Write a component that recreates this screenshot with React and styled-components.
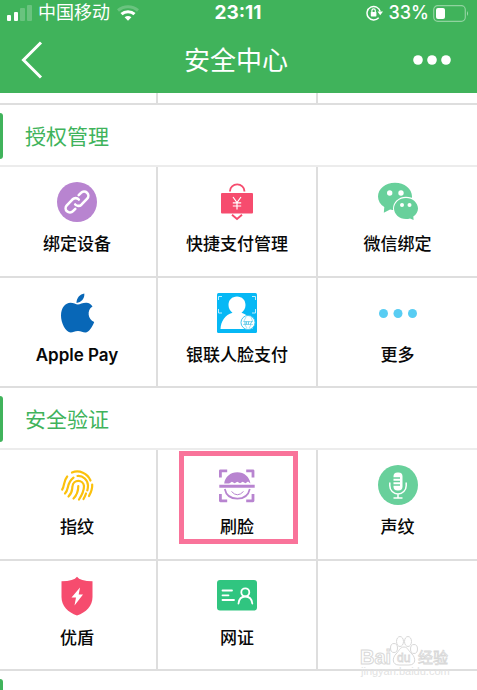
import React from 'react';
import styled, { createGlobalStyle } from 'styled-components';

const GlobalStyle = createGlobalStyle`
  * { box-sizing: border-box; }
  body {
    margin: 0;
    background: #fff;
    font-family: Inter, "Noto Sans CJK SC", sans-serif;
  }
  button { font: inherit; color: inherit; border: 0; padding: 0; background: none; cursor: pointer; }
  svg { display: block; }
`;

const green = '#40b35b';
const line = '#dedede';

const Screen = styled.div`
  position: relative;
  height: 100vh;
  overflow: hidden;
  background: #fff;
`;

const TopBar = styled.header`
  background: ${green};
  color: #fff;
`;

const StatusBar = styled.div`
  display: grid;
  grid-template-columns: 1fr auto 1fr;
  align-items: center;
  height: 26px;
  padding: 0 8px 0 7px;
  font-size: 18px;
  line-height: 26px;
`;

const StatusGroup = styled.div`
  display: flex;
  align-items: center;
  justify-content: ${(p) => (p.$end ? 'flex-end' : 'flex-start')};
  gap: 6px;
`;

const Battery = styled.span`
  display: flex;
  align-items: center;
  gap: 4px;
  font-weight: 500;
`;

const Clock = styled.time`
  font-size: 19px;
  font-weight: 700;
`;

const NavBar = styled.div`
  display: grid;
  grid-template-columns: 1fr auto 1fr;
  align-items: center;
  height: 67px;
  padding: 0 25px 0 20px;
`;

const NavButton = styled.button`
  justify-self: ${(p) => (p.$end ? 'end' : 'start')};
`;

const Title = styled.h1`
  margin: 0;
  padding-top: 2px;
  font-size: 26px;
  font-weight: 400;
  line-height: 36px;
`;

const Grid = styled.div`
  display: grid;
  grid-template-columns: 158fr 158fr 159fr;
  grid-template-rows: ${(p) => (p.$peek ? '10px' : '109px 108px')};
  gap: 2px;
  margin-left: -2px;
  background: ${line};
  border-bottom: 2px solid ${line};
`;

const Cell = styled.div`
  background: #fff;
`;

const Tile = styled.button`
  position: relative;
  display: flex;
  flex-direction: column;
  align-items: center;
  gap: 10px;
  min-width: 0;
  padding-top: 15px;
  background: #fff;
  color: #080808;
`;

const TileLabel = styled.span`
  font-size: 17px;
  font-weight: 500;
  line-height: 24px;
  white-space: nowrap;
`;

const LatinLabel = styled(TileLabel)`
  font-weight: 600;
`;

const Highlight = styled.span`
  position: absolute;
  inset: 1px 18px 15px 21px;
  border: 5px solid #f9739a;
  pointer-events: none;
`;

const SectionHead = styled.div`
  display: flex;
  align-items: center;
  gap: 22px;
  height: 62px;
  padding-top: 2px;
  border-bottom: 2px solid #ececec;

  &::before {
    content: '';
    width: 3px;
    height: 46px;
    border-radius: 0 3px 3px 0;
    background: ${green};
  }
`;

const SectionTitle = styled.h2`
  margin: 0;
  padding-top: 2px;
  color: ${green};
  font-size: 21px;
  font-weight: 400;
  line-height: 30px;
`;

const Watermark = styled.svg`
  position: absolute;
  right: 17px;
  bottom: 6px;
  overflow: visible;
`;

const SignalIcon = () => (
  <svg width="25" height="16" viewBox="0 0 25 16" fill="#fff" aria-hidden="true">
    <rect x="0" y="10" width="4" height="6" rx="1" />
    <rect x="7" y="7" width="4" height="9" rx="1" />
    <rect x="13" y="3" width="5" height="13" rx="1" opacity=".22" />
    <rect x="20" y="0" width="5" height="16" rx="1" opacity=".22" />
  </svg>
);

const WifiIcon = () => (
  <svg width="24" height="16" viewBox="-1 0 24 16" fill="none" stroke="#fff" aria-hidden="true">
    <path d="M1 5.500C6.800 .5 15.200 .5 21 5.500" strokeWidth="3" opacity=".22" />
    <path d="M4.500 9.200C8 5.900 14 5.900 17.500 9.200" strokeWidth="3" />
    <path d="M7.600 12.300C9.600 10.500 12.400 10.500 14.400 12.300L11 15.800Z" fill="#fff" stroke="none" />
  </svg>
);

const LockIcon = () => (
  <svg width="17" height="16" viewBox="0 0 17 16" fill="none" stroke="#fff" aria-hidden="true">
    <path d="M12.700 12.700A6.700 6.700 0 1 1 14.200 6.500" strokeWidth="1.500" />
    <path d="M11.500 6.500H17L14.200 10.200Z" fill="#fff" stroke="none" />
    <rect x="4.800" y="7" width="5.600" height="4.400" rx=".6" fill="#fff" stroke="none" />
    <path d="M5.900 7V5.600a1.700 1.700 0 0 1 3.400 0V7" strokeWidth="1.200" />
  </svg>
);

const BatteryIcon = () => (
  <svg width="36" height="17" viewBox="0 0 36 17" fill="none" aria-hidden="true">
    <rect x=".7" y=".7" width="31.600" height="15.600" rx="4" stroke="#fff" strokeWidth="1.200" opacity=".42" />
    <rect x="3" y="3" width="9" height="11" rx="2" fill="#fff" />
    <path d="M34 6q2 2.500 0 5z" fill="#fff" opacity=".5" />
  </svg>
);

const BackIcon = () => (
  <svg width="24" height="38" viewBox="0 0 24 38" fill="none" stroke="#fff" strokeWidth="3" aria-hidden="true">
    <path d="M21 1.500L3.500 19L21 36.500" />
  </svg>
);

const MoreIcon = () => (
  <svg width="40" height="12" viewBox="0 0 40 12" fill="#fff" aria-hidden="true">
    <circle cx="6" cy="6" r="4.800" /><circle cx="20" cy="6" r="4.800" /><circle cx="34" cy="6" r="4.800" />
  </svg>
);

const Icon = ({ children }) => (
  <svg width="40" height="40" viewBox="0 0 40 40" fill="none" aria-hidden="true">{children}</svg>
);

const LinkIcon = () => (
  <Icon>
    <circle cx="20" cy="20" r="20" fill="#b884d0" />
    <g stroke="#fff" strokeWidth="2.600" strokeLinecap="round">
      <path d="M21.700 13.200l2.300-2.300a4.200 4.200 0 0 1 6.200 5.800l-5.800 6a4.300 4.300 0 0 1-6.200-.2" />
      <path d="M18.300 26.800l-2.300 2.300a4.200 4.200 0 0 1-6.200-5.800l5.800-6a4.300 4.300 0 0 1 6.200.2" />
    </g>
  </Icon>
);

const PayBagIcon = () => (
  <Icon>
    <rect x="4" y="11" width="32" height="20.500" rx="1" fill="#f64c6e" />
    <path d="M13 9.500V9a7.200 6.600 0 0 1 14.400 0v.5" stroke="#f64c6e" strokeWidth="1.900" />
    <path d="M15 32.800l5 4.200 5-4.200" stroke="#f64c6e" strokeWidth="1.900" />
    <path d="M16 15L20 20.500l4-5.500M20 20.500v7M15.800 20.800h8.400M15.800 24h8.400" stroke="#fff" strokeWidth="1.200" />
  </Icon>
);

const ChatIcon = () => (
  <Icon>
    <path d="M17 .8C7.600.8 0 6.800 0 14.500c0 4.300 2.300 8 6.300 10.500l-.5 5.800 6.300-3.300c1.600.4 3.200.6 4.900.6 9.400 0 17-6 17-13.600S26.400.8 17 .8z" fill="#68d09b" />
    <ellipse cx="28" cy="26.500" rx="13" ry="11.700" fill="#fff" />
    <path d="M28 16c-6.600 0-12 4.700-12 10.500S21.400 37 28 37c1.400 0 2.700-.2 4-.6l3.600 1.600-.3-3.400c2.800-2 4.700-4.800 4.700-8.100C40 20.700 34.600 16 28 16z" fill="#68d09b" />
    <g fill="#fff"><circle cx="11.700" cy="11" r="2.700" /><circle cx="23" cy="11" r="2.700" /><circle cx="24" cy="23" r="2" /><circle cx="31.500" cy="23" r="2" /></g>
  </Icon>
);

const AppleIcon = () => (
  <Icon>
    <path d="M19.500 9.900C19.400 5 23 1.200 27.300.5c.6 4.800-3.200 9.100-7.800 9.400z" fill="#0867b7" />
    <path d="M35.500 13.500c-6 3.500-4.700 13 1.700 15.500-2 5-5.300 10.300-8.700 10.500-2.600.1-4.300-1.500-7.500-1.500s-5 1.400-7.300 1.500C8.700 39.300 3.900 29.800 4 22.500 4.100 14.500 8.300 10 13.500 9.700c3 0 5.400 1.700 7.400 1.700 2 0 5.100-1.900 8.600-1.700 2.300.1 4.700 1.600 6 3.800z" fill="#0867b7" />
  </Icon>
);

const FacePayIcon = () => (
  <Icon>
    <rect width="40" height="40" rx="1.500" fill="#06b8f5" />
    <path d="M1.500 7V3.500H5M35 3.500h3.500V7M1.500 16v4H5M35 20h3.500v-4" stroke="#bdeeff" strokeWidth="1" />
    <path d="M20 3.500c-5 0-8.500 3.500-8.500 8.500 0 3.400 1.700 6 4 7.800C8 22 4 28 3.500 36h32C35.300 28 31.500 22 24.500 19.800c2.300-1.800 4-4.400 4-7.800 0-5-3.500-8.500-8.500-8.500z" fill="#fff" />
    <circle cx="31" cy="29.500" r="7" fill="#fff" stroke="#45c6ef" strokeWidth="1" />
    <path d="M26 28.500h10M26 31.500h10M29 24l-2 4M34 24l1.500 4M28 32l2 3M34 32l-2 3" stroke="#8dd9ef" strokeWidth=".8" />
    <path d="M28 28v4M30 28l-1 4M32 28l-1 4M35 28l-2 4" stroke="#56c7e8" strokeWidth="1" />
  </Icon>
);

const DotsIcon = () => (
  <Icon><g fill="#58cdf3"><circle cx="5.500" cy="20.500" r="4.500" /><circle cx="20" cy="20.500" r="4.500" /><circle cx="34.500" cy="20.500" r="4.500" /></g></Icon>
);

const FingerprintIcon = () => (
  <Icon>
    <g stroke="#fbc10c" strokeWidth="2.200" strokeLinecap="round">
      <path d="M15 7.500A14.300 14.300 0 0 1 33.500 15.500" />
      <path d="M5.200 24.500C7.800 21 6 16.500 10.200 11.500" />
      <path d="M35.200 19.500C35.500 24 33.700 28 32 31" />
      <path d="M8 28.500C12.500 24 9 18.500 16.500 12.700" />
      <path d="M20.500 11A9.800 9.800 0 0 1 31 20.500Q31 23 30.300 25.500" />
      <path d="M29 28.500Q28 31.500 26.500 34" />
      <path d="M11.500 31.500C16 27 14.800 25 15.500 21A5.800 5.800 0 0 1 27 21C27 26 25 30 22 34.500" />
      <path d="M16.500 33.500C20 30 21.300 26 21.300 21" />
    </g>
  </Icon>
);

const FaceScanIcon = () => (
  <Icon>
    <path d="M3.400 12.500V5.800h6.800M29.200 5.800H36v6.700M3.400 29v6.800h6.800M29.200 35.800H36V29" stroke="#b884d0" strokeWidth="2.800" strokeLinejoin="round" />
    <path d="M7.200 18.500C8 12 13.300 7.300 20.300 7.300S32.500 12 33.400 18.500L31 16.500l-2.500 1.800-2.800-1.600-2.700 1.600-2.700-1.600-2.700 1.600-2.700-1.600-2.700 1.800z" fill="#b884d0" />
    <path d="M2.300 21.300h35.400" stroke="#b884d0" strokeWidth="3" />
    <path d="M7.800 24C9 30 13.500 33.600 20.300 33.600S31.500 30 32.800 24" stroke="#b884d0" strokeWidth="1.700" />
    <path d="M14.500 26.500Q20.300 33 26.500 26.500" stroke="#b884d0" strokeWidth="1" />
  </Icon>
);

const MicIcon = () => (
  <Icon>
    <circle cx="20" cy="20" r="20" fill="#68d09b" />
    <rect x="15.500" y="7.500" width="9" height="18" rx="4" fill="#fff" />
    <path d="M15 13h7M15 16.500h7M15 20h7" stroke="#68d09b" strokeWidth="1.300" />
    <path d="M11.800 17.500v3.200a8.200 8.200 0 0 0 16.400 0v-3.200M20 29v4M15.500 33h9" stroke="#fff" strokeWidth="1.500" />
  </Icon>
);

const ShieldIcon = () => (
  <Icon>
    <path d="M20 .7Q17 5 4.500 5.300V21C4.500 30 11 36.500 20 39.500C29 36.500 35.500 30 35.500 21V5.300Q23 5 20 .7z" fill="#f64c6e" />
    <path d="M23 11.500L14.500 21.500H19L17.500 29.500L26 18.500H21.700z" fill="#fff" />
  </Icon>
);

const IdCardIcon = () => (
  <Icon>
    <rect y="4" width="40" height="30.500" rx="3" fill="#30c580" />
    <g stroke="#fff" strokeWidth="1.800" strokeLinecap="round">
      <path d="M5.500 14.500H15M5.500 19.300H11.500M5.500 24H17" />
      <circle cx="28.300" cy="16.300" r="4" />
      <path d="M21.500 27.500c.5-4.500 3-7 6.800-7s6.500 2.500 7 7" />
    </g>
  </Icon>
);

const sections = [
  {
    title: '授权管理',
    items: [
      { label: '绑定设备', icon: LinkIcon },
      { label: '快捷支付管理', icon: PayBagIcon },
      { label: '微信绑定', icon: ChatIcon },
      { label: 'Apple Pay', icon: AppleIcon, latin: true },
      { label: '银联人脸支付', icon: FacePayIcon },
      { label: '更多', icon: DotsIcon },
    ],
  },
  {
    title: '安全验证',
    items: [
      { label: '指纹', icon: FingerprintIcon },
      { label: '刷脸', icon: FaceScanIcon, highlighted: true },
      { label: '声纹', icon: MicIcon },
      { label: '优盾', icon: ShieldIcon },
      { label: '网证', icon: IdCardIcon },
    ],
  },
];

function Section({ title, items }) {
  return (
    <section>
      <SectionHead><SectionTitle>{title}</SectionTitle></SectionHead>
      <Grid>
        {items.map(({ label, icon: Drawing, highlighted, latin }) => {
          const Label = latin ? LatinLabel : TileLabel;
          return (
            <Tile key={label} type="button">
              <Drawing />
              <Label>{label}</Label>
              {highlighted && <Highlight />}
            </Tile>
          );
        })}
        {items.length % 3 !== 0 && <Cell />}
      </Grid>
    </section>
  );
}

export default function App() {
  return (
    <Screen>
      <GlobalStyle />
      <TopBar>
        <StatusBar>
          <StatusGroup><SignalIcon /><span>中国移动</span><WifiIcon /></StatusGroup>
          <Clock>23:11</Clock>
          <StatusGroup $end>
            <LockIcon />
            <Battery><span>33%</span><BatteryIcon /></Battery>
          </StatusGroup>
        </StatusBar>
        <NavBar>
          <NavButton type="button" aria-label="返回"><BackIcon /></NavButton>
          <Title>安全中心</Title>
          <NavButton type="button" aria-label="更多选项" $end><MoreIcon /></NavButton>
        </NavBar>
      </TopBar>
      <main>
        <Grid $peek><Cell /><Cell /><Cell /></Grid>
        {sections.map((s) => <Section key={s.title} {...s} />)}
        <SectionHead />
      </main>
      <Watermark width="100" height="50" viewBox="0 0 100 50" fontFamily="Liberation Sans, Noto Sans CJK SC, sans-serif">
        <g fill="#fff" stroke="#d8d8d8" strokeWidth="1">
          <text x="0" y="30" fontSize="20" fontWeight="700">Bai</text>
          <ellipse cx="34" cy="14" rx="3.500" ry="4.500" />
          <ellipse cx="40" cy="7.500" rx="3.500" ry="5" />
          <ellipse cx="48" cy="7.500" rx="3.500" ry="5" />
          <ellipse cx="54" cy="15" rx="3.500" ry="4.500" />
          <path d="M44 13c-4 0-5 4-8 7-4 4-4 11 3 11h10c7 0 7-7 3-11-4-3-4-7-8-7z" />
          <text x="37" y="28" fontSize="12" fontWeight="400" strokeWidth=".8">du</text>
          <text x="58" y="29" fontSize="15" fontWeight="400" strokeWidth=".8">经验</text>
        </g>
        <text x="1" y="41" fontSize="11" fill="#e2e2e2">jingyan.baidu.com</text>
      </Watermark>
    </Screen>
  );
}
